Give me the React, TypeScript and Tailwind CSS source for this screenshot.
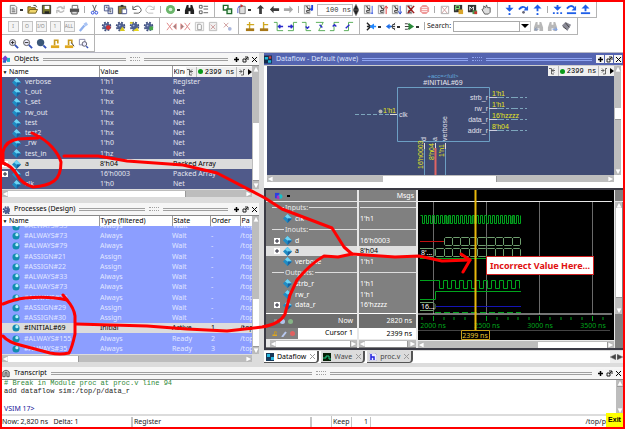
import React from "react";

type Kids = { children?: React.ReactNode };

/* ---------- small drawings ---------- */
const DARK = "#3c3c3c";
const doc = (
  <>
    <path d="M2.500 1.500h5l2 2v7h-7z" fill="#f4f4f4" stroke="#777" />
    <path d="M4 4.500h3M4 6.500h4M4 8.500h4" stroke="#555" />
  </>
);
const gear = (
  <>
    <circle cx="6" cy="6" r="3.600" fill="#4d5f92" />
    <circle cx="6" cy="6" r="4.300" fill="none" stroke="#3d4c7c" strokeWidth="1.800" strokeDasharray="2 1.400" />
    <circle cx="5" cy="5" r="1" fill="#a4b2d8" />
  </>
);
const lens = (
  <>
    <circle cx="5" cy="5" r="3.300" fill="#eef" stroke="#555" />
    <path d="M7.500 7.500L11 11" stroke="#3450b8" strokeWidth="2" />
  </>
);
const lock = (
  <>
    <path d="M5 8V2.500h3.500V6" fill="none" stroke="#c89a20" strokeWidth="1.800" />
    <path d="M1 8h9v3H1z" fill="#e0a820" />
  </>
);
const wave = (d: string, blue: string) => (
  <>
    <path d={d} fill="none" stroke="#4fa84f" />
    <path d={blue} fill="none" stroke="#2c2ccc" strokeWidth="1.500" />
  </>
);
const miniDoc = (mark: React.ReactNode) => (
  <>
    <path d="M1.500 1.500h6v9h-6z" fill="#f0f0f0" stroke="#999" />
    <path d="M3 3h2v2h2v2H4v2h3" fill="none" stroke="#333" />
    {mark}
  </>
);
const binoc = (c: string) => (
  <path d="M3 1h2v3h2V1h2l2 6v4H7V8H5v3H1V7z" fill={c} />
);

const ICONS: Record<string, React.ReactNode> = {
  doc,
  open: (
    <>
      <path d="M1 9.500V3h3l1 1h4v2" fill="#c9a93a" stroke="#6b5a1c" />
      <path d="M1 10l2-4h8.500l-2 4z" fill="#efd56a" stroke="#6b5a1c" />
      <path d="M7 1.500q3-1 3.500 2" fill="none" stroke="#333" />
    </>
  ),
  save: (
    <>
      <path d="M1.500 1.500h9v9h-9z" fill="#77782e" stroke="#333" />
      <path d="M4 2h5v3.500H4z" fill="#fff" />
      <path d="M4 8h5v2.500H4z" fill="#222" />
    </>
  ),
  refresh: <path d="M2 5q4-4 7 0M10 2v3H7M10 7q-4 4-7 0M2 10V7h3" fill="none" stroke="#bbb" strokeWidth="1.500" />,
  print: (
    <>
      <path d="M3.500 5V1.500h6V5" fill="#fff" stroke="#666" />
      <path d="M1 5h10v4H1z" fill="#555" />
      <path d="M3 8h6v3H3z" fill="#ddd" stroke="#555" />
    </>
  ),
  cut: (
    <>
      <path d="M4 1l3 7M8 1L5 8" stroke="#555" />
      <circle cx="4" cy="9.500" r="1.500" fill="none" stroke="#2244dd" />
      <circle cx="8" cy="9.500" r="1.500" fill="none" stroke="#2244dd" />
    </>
  ),
  copy: (
    <>
      <path d="M1.500 1.500h5v6h-5zM5.500 4.500h5v6h-5z" fill="#e8ecff" stroke="#4a5688" />
      <path d="M3 3.500h2M7 6.500h2M7 8.500h2" stroke="#333" />
    </>
  ),
  paste: (
    <>
      <path d="M1.500 2.500h8v8h-8z" fill="#8a8240" stroke="#444" />
      <path d="M4 1h3v2H4z" fill="#333" />
      <path d="M5.500 5.500h5v5h-5z" fill="#fff" stroke="#55609a" />
    </>
  ),
  undo: <path d="M2 2v4h4M2 5q5-5 8-1t-2 6H3" fill="none" stroke="#555" />,
  redo: <path d="M10 2v4H6M10 5Q5 0 2 4t2 6h5" fill="none" stroke="#bbb" />,
  go: (
    <>
      <circle cx="6" cy="6" r="5" fill="#6bb56b" />
      <circle cx="6" cy="6" r="2" fill="#d9f0d9" />
    </>
  ),
  find: binoc("#222"),
  list: <path d="M1.500 1.500h3v3h-3zM1.500 7.500h3v3h-3zM6 2.500h5M6 5.500h5M6 9.500h5" fill="none" stroke="#555" />,
  boxes: (
    <>
      <path d="M1.500 1.500h5v5h-5z" fill="#fff" stroke="#1f6b2c" strokeWidth="1.500" />
      <path d="M5.500 5.500h5v5h-5z" fill="#d7f3d7" stroke="#1f6b2c" strokeWidth="1.500" />
    </>
  ),
  reload: (
    <>
      <path d="M4 2.500h6v8H4z" fill="#ddd" stroke="#777" />
      <path d="M2 10V5q0-3 4-3" fill="none" stroke="#4455cc" />
      <path d="M5 0l3 2-3 2z" fill="#c33" />
    </>
  ),
  up: <path d="M6 1L2 5h2.500v6h3V5H10z" fill={DARK} />,
  left: <path d="M1 6l4-4v2.500h6v3H5V10z" fill={DARK} />,
  right: <path d="M11 6L7 2v2.500H1v3h6V10z" fill="#a8a8a8" />,
  run1: miniDoc(<path d="M10 1v6M8 5l2 2" stroke="#2244dd" strokeWidth="2" />),
  run2: miniDoc(<path d="M10 2v9M8 10h3" stroke="#3355dd" />),
  run3: miniDoc(<path d="M10 3v8M8 5l2-3 2 3" fill="none" stroke="#d33" />),
  run4: miniDoc(<path d="M10 2v9M8 8l2 3 2-3" fill="none" stroke="#2244cc" />),
  brk: miniDoc(<path d="M3 2l7 8M10 2l-7 8" stroke="#a01818" strokeWidth="1.500" />),
  stop: (
    <>
      <path d="M4 1h4l3 3v4l-3 3H4L1 8V4z" fill="#ee9a9a" />
      <path d="M3 4h6M3 6h6M3 8h6" stroke="#fff" />
    </>
  ),
  cross: (
    <>
      <path d="M2.500 2.500h8v8h-8z" fill="none" stroke="#aaa" />
      <path d="M3 3l6 7M9 3l-6 7" stroke="#c99" />
    </>
  ),
  perf: (
    <>
      <path d="M1 1h9v8H1z" fill="#333" />
      <path d="M3 2v5M3 2h4v3H3" fill="none" stroke="#8f8" />
      <path d="M6 6h5v5H6z" fill="#d9a52c" />
    </>
  ),
  mem: (
    <>
      <path d="M1 1h9v8H1z" fill="#333" />
      <path d="M3 7V3l2 2 2-2v4" fill="none" stroke="#fff" />
      <path d="M6 7h5v4H6z" fill="#4a9a4a" />
      <path d="M8 8h3v3H8z" fill="#c33" />
    </>
  ),
  hand: <path d="M4 11L1 6l2-1V2l2 2 1-3 1 3 3 0v5l-2 2z" fill="#ddd" stroke="#555" />,
  stepIn: (
    <>
      <path d="M6 1v5M4 5h4L6 7z" stroke="#1f5fe8" strokeWidth="2" fill="#1f5fe8" />
      <circle cx="6" cy="11" r="1.200" fill="#1f5fe8" />
    </>
  ),
  stepOver: (
    <>
      <path d="M1 6q4-5 8-1" fill="none" stroke="#1f5fe8" strokeWidth="2" />
      <path d="M11 2v5H6z" fill="#1f5fe8" />
      <circle cx="6" cy="9" r="1.500" fill="#667" />
    </>
  ),
  stepOut: (
    <>
      <path d="M6 8V4M4 4l2-2 2 2z" stroke="#1f5fe8" strokeWidth="2" fill="#1f5fe8" />
      <circle cx="6" cy="11" r="1.200" fill="#1f5fe8" />
    </>
  ),
  stepInC: (
    <>
      <path d="M6 1v4M4 4h4L6 6z" stroke="#1f5fe8" strokeWidth="2" fill="#1f5fe8" />
      <path d="M1 10h2M5 10h2M9 10h2" stroke="#1f5fe8" strokeWidth="2" />
    </>
  ),
  stepOverC: (
    <>
      <path d="M1 5q4-5 8-1" fill="none" stroke="#1f5fe8" strokeWidth="2" />
      <path d="M11 2v5H6z" fill="#1f5fe8" />
      <path d="M1 10h10" stroke="#1f5fe8" strokeWidth="2" />
    </>
  ),
  stepOutC: (
    <>
      <path d="M6 8V3M4 4l2-2 2 2z" stroke="#1f5fe8" strokeWidth="2" fill="#1f5fe8" />
      <path d="M1 10h10" stroke="#1f5fe8" strokeWidth="2" />
    </>
  ),
  wand: (
    <>
      <path d="M2 11l5-6" stroke="#8fb0ee" strokeWidth="2.500" />
      <path d="M6 3l3-2 2 3-3 2z" fill="#aac4f4" />
    </>
  ),
  gearRed: (
    <>
      {gear}
      <circle cx="8" cy="7" r="2.500" fill="#d63030" />
    </>
  ),
  gearYel: (
    <>
      {gear}
      <path d="M8 6l3 5H5z" fill="#d8c820" />
    </>
  ),
  gearYel2: (
    <>
      {gear}
      <path d="M9 7l2 4H4z" fill="#e8d820" />
      <path d="M1 1h3v2H1z" fill="#d8c820" />
    </>
  ),
  gearGrn: (
    <>
      {gear}
      <path d="M7 6h4v4H7z" fill="#4aa84a" />
    </>
  ),
  xLeft: <path d="M1 2l6 8M7 2L1 10M11 3L8 6l3 3z" stroke="#dd8080" fill="#888" />,
  xRight: <path d="M5 2l6 8M11 2l-6 8M1 3l3 3-3 3z" stroke="#dd8080" fill="#888" />,
  page: (
    <>
      <path d="M1.500 1.500h9v9h-9z" fill="#f4f4f4" stroke="#c4c4c4" />
      <path d="M4 3.500h3l1 1v5H4z" fill="#fff" stroke="#999" />
    </>
  ),
  pageX: (
    <>
      <path d="M1.500 1.500h8v9h-8z" fill="#f0f0f0" stroke="#bbb" />
      <path d="M3 4l5 5M8 4L3 9" stroke="#cc9999" />
    </>
  ),
  pctX: (
    <>
      <path d="M2 2l5 5M7 2L2 7" stroke="#cc9999" />
      <circle cx="8.500" cy="8.500" r="2" fill="#a9b6dd" />
    </>
  ),
  curAdd: (
    <>
      <path d="M5 1v8M2 4h8" stroke="#d0a820" strokeWidth="1.500" />
      <path d="M1 8h9v3H1z" fill="#a87818" />
    </>
  ),
  curDel: (
    <>
      <path d="M5 1v8M5 4h5" stroke="#d0a820" strokeWidth="1.500" />
      <path d="M1 8h9v3H1z" fill="#a87818" />
    </>
  ),
  wA: wave("M1 1.500h3.500v9h6.500", "M5 6h6M8 4L6 6l2 2"),
  wB: wave("M1 10.500h6v-9h4", "M1 6h6M4 4l2 2-2 2"),
  wC: wave("M1 1.500h4.500v9h5.500", "M5 6l2 2 2-2"),
  wD: wave("M1 1.500h8L4 10.500h7", "M5 4l3 3"),
  wE: wave("M1 10.500h4.500v-9h5.500", "M4 6l2-2 2 2"),
  wF: wave("M1 10.500h5v-9h5", "M3 8l4-4"),
  inj1: (
    <>
      <path d="M1 2l4 4-4 4M1 6h5" fill="none" stroke="#222" strokeWidth="1.500" />
      <path d="M5 6l3-2v4zM8 6h3" fill="#28f" stroke="#28f" strokeWidth="1.500" />
    </>
  ),
  inj2: (
    <>
      <path d="M11 2L7 6l4 4M7 6h4M8 4h3M8 8h3" fill="none" stroke="#333" />
      <path d="M1 6l4-3v6zM4 5h3v2H4z" fill="#1f6fe8" />
    </>
  ),
  inj3: (
    <>
      <path d="M1 3h3l3 3-3 3H1M1 6h5" fill="none" stroke="#333" />
      <path d="M5 2l6 4-6 4z" fill="#2a8a3a" />
    </>
  ),
  findB: (
    <>
      {binoc("#b8b8b8")}
      <path d="M2 9h4M2 9l2-2M2 9l2 2" stroke="#89b" />
    </>
  ),
  findF: (
    <>
      {binoc("#b8b8b8")}
      <path d="M6 9h5M11 9L9 7M11 9l-2 2" stroke="#77a0ee" />
    </>
  ),
  knot: (
    <>
      <path d="M1 5l4-4 6 3-4 7z" fill="#8a8a96" />
      <path d="M2 6l4 3M5 2l4 5" stroke="#444" />
    </>
  ),
  zoomIn: (
    <>
      {lens}
      <path d="M3 5h4M5 3v4" stroke="#222" />
    </>
  ),
  zoomOut: (
    <>
      {lens}
      <path d="M3 5h4" stroke="#222" />
    </>
  ),
  zoomFull: (
    <>
      <circle cx="5" cy="5" r="4" fill="#3c5878" />
      <path d="M8 8l3 3" stroke="#3450b8" strokeWidth="2" />
    </>
  ),
  lock,
  lock2: (
    <>
      {lock}
      <path d="M8 5l3 4" stroke="#333" />
    </>
  ),
  zoomBox: (
    <>
      <path d="M1.500 1.500h6v6h-6z" fill="none" stroke="#88a" />
      <circle cx="7" cy="6.500" r="2.500" fill="#eef" stroke="#556" />
      <path d="M9 9l2 2" stroke="#3450b8" strokeWidth="1.500" />
    </>
  ),
};

function Tool({ name }: { name: string }) {
  return (
    <button type="button" aria-label={name} className="flex w-[14px] shrink-0 items-center justify-center">
      <svg viewBox="0 0 12 12" className="h-[11px] w-[11px]">{ICONS[name]}</svg>
    </button>
  );
}

function Letter({ text }: { text: string }) {
  return (
    <button type="button" className="flex w-[14px] shrink-0 items-center justify-center">
      <span className="flex h-[11px] w-[11px] items-center justify-center border border-[#c4c4c4] bg-[#f4f4f4] text-[5px] leading-none text-[#888]">{text}</span>
    </button>
  );
}

/* a dash is a separator, a dot is the arrow of a drop-down */
function Tools({ names }: { names: string }) {
  return (
    <>
      {names.split(" ").map((n, i) =>
        n === "-" ? (
          <span key={i} className="flex w-[6px] shrink-0 justify-center py-1"><span className="w-px bg-[#aaa]" /></span>
        ) : n === "." ? (
          <span key={i} className="flex w-[5px] shrink-0 items-center pt-px"><span className="h-[2px] w-[3px] bg-[#333]" /></span>
        ) : (
          <Tool key={i} name={n} />
        )
      )}
    </>
  );
}

const Group = ({ children }: Kids) => (
  <div className="flex shrink-0 items-stretch border-b border-r border-[#b4b4b4] bg-white px-1">{children}</div>
);

function Tri({ dir, color = "#fff" }: { dir: "up" | "down" | "left" | "right"; color?: string }) {
  const d = { up: "M3 0l3 6H0z", down: "M3 6l3-6H0z", left: "M0 3l6-3v6z", right: "M6 3L0 0v6z" }[dir];
  return (
    <svg viewBox="0 0 6 6" className="h-[6px] w-[6px] shrink-0"><path d={d} fill={color} stroke="#999" strokeWidth="0.500" /></svg>
  );
}

function VScroll({ before, thumb, after }: { before: number; thumb: number; after: number }) {
  return (
    <div className="flex w-[7px] shrink-0 flex-col items-center bg-[#bdbdbd]">
      <Tri dir="up" />
      <div style={{ flexGrow: before }} />
      <div className="w-[6px] border-b border-[#999] bg-white" style={{ flexGrow: thumb }} />
      <div style={{ flexGrow: after }} />
      <Tri dir="down" />
    </div>
  );
}

function HScroll({ before, thumb, after }: { before: number; thumb: number; after: number }) {
  return (
    <div className="flex h-[7px] shrink-0 items-center bg-[#bdbdbd]">
      <Tri dir="left" />
      <div style={{ flexGrow: before }} />
      <div className="h-[6px] border-r border-[#999] bg-white" style={{ flexGrow: thumb }} />
      <div style={{ flexGrow: after }} />
      <Tri dir="right" />
    </div>
  );
}

function TitleBar({ title, icon, blue }: { title: string; icon: React.ReactNode; blue?: boolean }) {
  const line = blue ? "border-[#8fa4f0]" : "border-[#a0a0a0]";
  const btn = "flex h-[8px] w-[8px] items-center justify-center bg-[#f4f4f4]";
  return (
    <div className={"flex h-[12px] shrink-0 items-center gap-1 pr-px " + (blue ? "bg-[#5464b0] text-[#dfe4ff]" : "bg-[#f6f6f6] text-black")}>
      <svg viewBox="0 0 10 10" className="h-[9px] w-[8px] shrink-0">{icon}</svg>
      <h2 className="whitespace-nowrap">{title}</h2>
      <div className={"h-[3px] flex-1 border-y " + line} />
      <div className={"h-[4px] w-[10px] border-y border-dotted " + line} />
      <div className={"h-[3px] flex-1 border-y " + line} />
      <div className="flex gap-px">
        <button type="button" aria-label="Zoom" className={btn}><svg viewBox="0 0 7 7" className="h-[7px] w-[7px]"><path d="M3.500 1v5M1 3.500h5" stroke="#000" strokeWidth="1.500" /></svg></button>
        <button type="button" aria-label="Undock" className={btn}><svg viewBox="0 0 7 7" className="h-[7px] w-[7px]"><path d="M1 3h3v3H1zM3 1h3v3M6 1L3 4" fill="none" stroke="#222" /></svg></button>
        <button type="button" aria-label="Close" className={btn}><svg viewBox="0 0 7 7" className="h-[7px] w-[7px]"><path d="M1 1l5 5M6 1L1 6" stroke="#000" /></svg></button>
      </div>
    </div>
  );
}

function TimeBox() {
  return (
    <div className="flex h-[10px] w-[66px] shrink-0 items-center justify-between bg-[#f0f0f0] text-black">
      <svg viewBox="0 0 8 8" className="h-[8px] w-[8px]"><path d="M1 1.500h2.500V7H6M7 3.500H4l2-2M4 3.500l2 2" fill="none" stroke="#444" strokeWidth="0.800" /></svg>
      <span className="h-[10px] w-px bg-[#bbb]" />
      <span className="h-[5px] w-[5px] rounded-full bg-[#0a9a1a]" />
      <span className="whitespace-nowrap font-['Liberation_Mono','DejaVu_Sans_Mono',monospace] text-[7px]">2399 ns</span>
      <span className="h-[10px] w-px bg-[#bbb]" />
      <svg viewBox="0 0 8 8" className="h-[8px] w-[8px]"><path d="M7 1.500H5.500V7H3M1 3.500h3l-2-2M4 3.500l-2 2" fill="none" stroke="#444" strokeWidth="0.800" /></svg>
      <svg viewBox="0 0 4 6" className="h-[6px] w-[4px]"><path d="M0 0l4 3-4 3z" fill="#000" /></svg>
    </div>
  );
}

const Diamond = () => (
  <svg viewBox="0 0 9 9" className="h-[9px] w-[9px] shrink-0">
    <path d="M4.500 0L9 4.500 4.500 9 0 4.500z" fill="#1f8cc4" />
    <path d="M4.500 0L9 4.500H4.500L2 2.500z" fill="#6fd4f4" />
    <path d="M4.500 9L9 4.500H5z" fill="#1560a0" />
  </svg>
);
const Ball = () => (
  <svg viewBox="0 0 9 9" className="h-[8px] w-[8px] shrink-0">
    <circle cx="4.500" cy="4.500" r="4" fill="#128cae" />
    <circle cx="5.500" cy="3" r="1.800" fill="#b8f2fa" />
  </svg>
);
const Plus = () => (
  <svg viewBox="0 0 6 6" className="h-[6px] w-[6px] shrink-0"><path d="M0 0h6v6H0z" fill="#fff" /><path d="M1 3h4M3 1v4" stroke="#223" /></svg>
);

const OBJECTS: [string, string, string][] = [
  ["verbose", "1'h1", "Register"], ["t_out", "1'hx", "Net"], ["t_set", "1'hx", "Net"], ["rw_out", "1'hx", "Net"],
  ["test", "1'hx", "Net"], ["test2", "1'hx", "Net"], ["_rw", "1'h0", "Net"], ["test_in", "1'hz", "Net"],
  ["a", "8'h04", "Packed Array"], ["d", "16'h0003", "Packed Array"], ["clk", "1'h0", "Net"],
];
const PROCS: [string, string, string, string][] = [
  ["#ALWAYS#73", "Always", "Wait", "-"], ["#ALWAYS#79", "Always", "Wait", "-"], ["#ASSIGN#21", "Assign", "Wait", "-"],
  ["#ASSIGN#22", "Assign", "Wait", "-"], ["#ALWAYS#33", "Always", "Wait", "-"], ["#ALWAYS#73", "Always", "Wait", "-"],
  ["#ALWAYS#79", "Always", "Wait", "-"], ["#ASSIGN#29", "Assign", "Wait", "-"], ["#ASSIGN#30", "Assign", "Wait", "-"],
  ["#INITIAL#69", "Initial", "Active", "1"], ["#ALWAYS#155", "Always", "Ready", "2"], ["#ALWAYS#35", "Always", "Ready", "3"],
];

const TH = "border-r border-[#999] bg-white p-0 pl-px text-left font-normal";

function ObjectsPanel() {
  return (
    <section>
      <TitleBar title="Objects" icon={<><path d="M4 0l4 4-4 4-4-4z" fill="#7a3fd0" /><path d="M6 3h4v5H6z" fill="#20b0c8" /><path d="M1 6h4v3H1z" fill="#2a60c8" /></>} />
      <div className="flex border-t border-[#888]">
        <table className="w-full flex-1 table-fixed border-collapse leading-[10px]">
          <colgroup><col className="w-[6px]" /><col className="w-[91px]" /><col className="w-[73px]" /><col /></colgroup>
          <thead>
            <tr className="h-[11px] text-black">
              <th className="bg-white p-0 text-[5px]">▼</th>
              <th className={TH}>Name</th>
              <th className={TH}>Value</th>
              <th className="bg-white p-0 pl-px font-normal"><div className="flex justify-between"><span className="w-[11px] overflow-hidden text-left">Kind</span><TimeBox /></div></th>
            </tr>
          </thead>
          <tbody>
            {OBJECTS.map(([n, v, k]) => (
              <tr key={n} className={"h-[10px] nth-[4n]:h-[11px] " + (n === "a" ? "bg-[#dcdcdc] text-black" : "bg-[#505a8a] text-[#e4e6f0]")}>
                <td className="p-0">{(n === "a" || n === "d") && <Plus />}</td>
                <td className="p-0 pl-1"><div className="flex h-[10px] items-center gap-1"><Diamond />{n}</div></td>
                <td className="p-0 pl-px">{v}</td>
                <td className="p-0 pl-px">{k}</td>
              </tr>
            ))}
          </tbody>
        </table>
        <VScroll before={51} thumb={58} after={2} />
      </div>
      <div className="mt-px pr-[7px]"><HScroll before={0} thumb={176} after={60} /></div>
    </section>
  );
}

function ProcessesPanel() {
  return (
    <section>
      <TitleBar title="Processes (Design)" icon={gear} />
      <div className="flex border-t border-[#888]">
        <table className="w-full flex-1 table-fixed border-collapse leading-[10px]">
          <colgroup><col className="w-[6px]" /><col className="w-[91px]" /><col className="w-[73px]" /><col className="w-[38px]" /><col className="w-[30px]" /><col /></colgroup>
          <thead>
            <tr className="h-[10px] text-black">
              <th className="bg-white p-0 text-[5px]">▼</th>
              <th className={TH}>Name</th>
              <th className={TH}>Type (filtered)</th>
              <th className={TH}>State</th>
              <th className={TH}>Order</th>
              <th className="bg-white p-0 pl-px text-left font-normal">Pa</th>
            </tr>
          </thead>
          <tbody>
            <tr className="h-[5px] bg-[#8c9eff] text-[#dfe5ff]">
              <td className="p-0" />
              {["#ALWAYS#33", "Always", "Wait", "-", "/top"].map((t, i) => (
                <td key={t} className={i ? "p-0 pl-px" : "p-0 pl-1"}><div className="flex h-[5px] items-end gap-1 overflow-hidden">{i === 0 && <Ball />}{t}</div></td>
              ))}
            </tr>
            {PROCS.map(([n, t, s, o], i) => (
              <tr key={i} className={"h-[10px] nth-[4n]:h-[11px] " + (i === 9 ? "bg-[#dcdcdc] text-black" : "bg-[#8c9eff] text-[#e2e8ff]")}>
                <td className="p-0" />
                <td className="p-0 pl-1"><div className="flex h-[10px] items-center gap-1"><Ball />{n}</div></td>
                <td className="p-0 pl-px">{t}</td>
                <td className="p-0">{s}</td>
                <td className="p-0 pl-px">{o}</td>
                <td className="p-0"><div className="overflow-hidden">/top</div></td>
              </tr>
            ))}
          </tbody>
        </table>
        <VScroll before={73} thumb={44} after={1} />
      </div>
      <div className="mt-px pr-[7px]"><HScroll before={0} thumb={69} after={166} /></div>
    </section>
  );
}

/* ---------- dataflow schematic ---------- */
const PORTS: [string, string, number][] = [["strb_r", "1'h1", 32], ["rw_r", "1'h1", 43], ["data_r", "16'hzzzz", 54], ["addr_r", "8'h04", 65]];

function Dataflow() {
  return (
    <section className="flex flex-col">
      <TitleBar blue title="Dataflow - Default (wave)" icon={<><path d="M0 0h10v10H0z" fill="#142a4a" /><path d="M1 2h4v3H1zM5 6h4v3H5z" fill="#20b8d8" /><path d="M6 1h3v3H6z" fill="#d04040" /></>} />
      <div className="flex border-t border-[#ccc] bg-white pl-[3px] pr-[2px]">
        <div className="relative h-[109px] flex-1 overflow-hidden bg-[#3f4a72]">
          <svg className="h-[109px] w-[347px] font-['Liberation_Sans',Arial,sans-serif] text-[7px]" viewBox="0 0 347 109">
            <path d="M130.500 21.500h92v54h-92z" fill="none" stroke="#6c9fc4" />
            <text x="176" y="12" textAnchor="middle" fill="#62a8dc" className="text-[6px]">+acc=&lt;full&gt;</text>
            <text x="176" y="19" textAnchor="middle" fill="#e8e8f0">#INITIAL#69</text>
            <path d="M88 48.500h35" stroke="#7da6bc" strokeDasharray="4 2" />
            <path d="M123 48.500h7" stroke="#ddd" />
            <circle cx="113.500" cy="45.500" r="2" fill="#b4b4b4" />
            <text x="116" y="47" fill="#e6e620">1'h1</text>
            <text x="132" y="51" fill="#e0e0ec">clk</text>
            {PORTS.map(([n, v, y]) => (
              <g key={n}>
                <text x="221" y={y + 2} textAnchor="end" fill="#e0e0ec">{n}</text>
                <path d={`M222 ${y - 0.5}h8`} stroke="#ccd" />
                <path d={`M230 ${y - 0.5}h30`} stroke="#7da6bc" strokeDasharray="7 2 3 2" />
                <text x="225" y={y - 2} fill="#e6e620">{v}</text>
              </g>
            ))}
            <path d="M157.500 77v32M178.500 77v32" stroke="#6c9fc4" />
            <path d="M157.500 77v6M168.500 77v6M178.500 77v6" stroke="#ddd" />
            <path d="M168.500 82v27" stroke="#e06464" strokeWidth="2" />
            <g fill="#e0e0ec">
              <text transform="translate(159 75) rotate(-90)">d</text>
              <text transform="translate(170 75) rotate(-90)">a</text>
              <text transform="translate(180 75) rotate(-90)">verbose</text>
            </g>
            <g fill="#e6e620">
              <text transform="translate(156 103) rotate(-90)">16'h0003</text>
              <text transform="translate(167 94) rotate(-90)">8'h04</text>
              <text transform="translate(177 91) rotate(-90)">1'h1</text>
            </g>
          </svg>
          <div className="absolute right-0 top-0"><TimeBox /></div>
        </div>
        <VScroll before={38} thumb={11} after={51} />
      </div>
      <div className="bg-white pb-[6px] pl-[3px] pr-[9px]"><HScroll before={118} thumb={122} after={119} /></div>
    </section>
  );
}

/* ---------- wave window ---------- */
type Sig = { name: string; value?: string; kind: "group" | "sig"; plus?: boolean; sel?: boolean };
const SIGNALS: Sig[] = [
  { name: "Inputs:", kind: "group" },
  { name: "clk", value: "1'h1", kind: "sig" },
  { name: "Inouts:", kind: "group" },
  { name: "d", value: "16'h0003", kind: "sig", plus: true },
  { name: "a", value: "8'h04", kind: "sig", plus: true, sel: true },
  { name: "verbose", value: "1'h1", kind: "sig" },
  { name: "Outputs:", kind: "group" },
  { name: "strb_r", value: "1'h1", kind: "sig" },
  { name: "rw_r", value: "1'h1", kind: "sig" },
  { name: "data_r", value: "16'hzzzz", kind: "sig", plus: true },
];
const ROW = "flex h-[11px] items-center nth-[5n]:h-[10px] ";

const square = (from: number, to: number, half: number, hi: number, lo: number) => {
  let d = `M${from} ${hi}`;
  let up = true;
  for (let x = from + half; x <= to; x += half) {
    up = !up;
    d += `H${x}V${up ? hi : lo}`;
  }
  return d;
};
const EDGES = [26.5, 34.5, 42.5, 51.5, 59.5, 68.5, 77.5, 85.5, 94.5, 102.5];
const bus = (edges: number[], top: number) =>
  edges.slice(1).map((b, i) => {
    const a = edges[i];
    return `M${a + 1} ${top}H${b - 1}L${b} ${top + 1}V${top + 7}L${b - 1} ${top + 8}H${a + 1}L${a} ${top + 7}V${top + 1}Z`;
  }).join("");

function Waves() {
  return (
    <svg className="h-[150px] w-[194px] text-[7px]" viewBox="0 0 194 150">
      <path d="M15.500 12v112M68.500 12v112M121.500 12v112M174.500 12v112" stroke="#6a6a6a" />
      <g fill="none" stroke="#00a41c">
        <path d="M26 26h7v8h-7zM52 26h6v8h-6zM92 26h5v8h-5z" fill="#064a10" stroke="none" />
        <path d={square(2.5, 103, 2, 25.5, 33.5)} />
        <path d="M2 68.500H103" />
        <path d={square(17.5, 103, 4, 90.5, 98.5)} />
        <path d="M2 90.500h15.500" />
        <path d="M2 109.500h15.500v-8H103" />
        <path d="M17 122.500H103" strokeDasharray="6 3" />
        <path d="M4 127v3M26 127v3M36 127v3M47 127v3M79 127v3M90 127v3M100 127v3M111 127v3M132 127v3M143 127v3M153 127v3M164 127v3M185 127v3M15.500 126v5M68.500 126v5M121.500 126v5M174.500 126v5" />
      </g>
      <g fill="none" stroke="#6f9f6f">
        <path d={bus(EDGES, 47.5)} />
        <path d={bus([17.5, ...EDGES], 58.5)} />
        <path d="M2 58.500h13l2 2v4l-2 2H2M2 112.500h13l2 2v4l-2 2H2" />
      </g>
      <path d="M2 51.500h24" stroke="#c01010" />
      <path d="M18 116.500h85" stroke="#1414b4" />
      <text x="3" y="65" fill="#fff">8'...</text>
      <text x="3" y="119" fill="#fff">16...</text>
      <path d="M0 11.500h195M0 124h195" stroke="#e8e8e8" />
      <g fill="#00a41c" textAnchor="middle">
        <text x="15" y="138">2000 ns</text>
        <text x="69" y="138">2500 ns</text>
        <text x="122" y="138">3000 ns</text>
        <text x="175" y="138">3500 ns</text>
      </g>
      <path d="M0 140.500h192" stroke="#444" />
      <path d="M57.500 0v140" stroke="#e8b80c" strokeWidth="2" />
      <path d="M43.500 140.500h28v9h-28z" fill="#000" stroke="#c8a01c" />
      <text x="57" y="148" textAnchor="middle" fill="#e8c830">2399 ns</text>
    </svg>
  );
}

function WavePanel() {
  return (
    <section className="flex border-2 border-r-0 border-[#3a3a44] bg-[#e8e8e8] text-white">
      <div className="flex w-[93px] shrink-0 flex-col border-r-2 border-[#e8e8e8] bg-[#808080]">
        <div className="flex h-[12px] items-center gap-1 border-b border-[#e8e8e8] pl-2">
          <svg viewBox="0 0 10 9" className="h-[8px] w-[9px]"><path d="M1 1h5v6H1z" fill="#2a3fe0" /><circle cx="7" cy="5" r="2.500" fill="#18c0c8" /><path d="M3 4h3v4H3z" fill="#b030c0" /></svg>
          <span className="h-[2px] w-[3px] bg-black" />
        </div>
        <div className="pb-[3px]">
          {SIGNALS.map((s) =>
            s.kind === "group" ? (
              <div key={s.name} className={ROW + "gap-px pl-[6px] text-[#e8e8e8]"}>
                <span className="h-px w-[12px] bg-[#ddd]" />{s.name}<span className="h-px flex-1 bg-[#ddd]" />
              </div>
            ) : (
              <div key={s.name} className={ROW + "gap-[3px] pl-[8px] " + (s.sel ? "bg-[#e0e0e0] text-black" : "")}>
                <span className="w-[6px]">{s.plus && <Plus />}</span><Diamond />{s.name}
              </div>
            )
          )}
        </div>
        <div className="flex h-[15px] items-center gap-[3px] border-t border-white bg-[#6e6e6e] pl-2 pr-1">
          <span className="h-[5px] w-[3px] bg-[#8a8a8a]" /><span className="h-[5px] w-[5px] rounded-full bg-[#b0c4ec]" /><span className="h-[5px] w-[5px] rounded-full bg-[#86b486]" />
          <span className="ml-auto">Now</span>
        </div>
        <div className="flex h-[11px] items-center gap-[3px] pl-[6px]">
          <svg viewBox="0 0 12 12" className="h-[7px] w-[6px]">{lock}</svg>
          <svg viewBox="0 0 6 6" className="h-[6px] w-[6px]"><path d="M1 6l4-5" stroke="#b8c8f0" strokeWidth="2" /></svg>
          <span className="h-[5px] w-[5px] rounded-full bg-[#e06060]" />
          <span className="flex-1 self-stretch bg-white pr-1 text-right text-black">Cursor 1</span>
        </div>
        <div className="bg-[#e8e8e8] pl-1 pt-px"><HScroll before={0} thumb={70} after={0} /></div>
      </div>
      <div className="flex w-[59px] shrink-0 flex-col border-r-2 border-[#e8e8e8] bg-[#808080]">
        <div className="flex h-[12px] items-center justify-end border-b border-[#e8e8e8] pr-[2px]">Msgs</div>
        <div className="pb-[3px]">
          {SIGNALS.map((s) => (
            <div key={s.name} className={ROW + "pl-px " + (s.sel ? "bg-[#e0e0e0] text-black" : "")}>
              {s.value ?? <span className="h-px flex-1 bg-[#ddd]" />}
            </div>
          ))}
        </div>
        <div className="flex h-[15px] items-center justify-end border-t border-white bg-[#6e6e6e] pr-1">2820 ns</div>
        <div className="flex h-[11px] items-center justify-end bg-white pr-1 text-black">2399 ns</div>
        <div className="bg-[#e8e8e8] pt-px"><HScroll before={0} thumb={40} after={2} /></div>
      </div>
      <div className="relative flex min-w-0 flex-1 flex-col bg-black">
        <Waves />
        <div className="bg-[#e8e8e8] pt-px"><HScroll before={110} thumb={66} after={0} /></div>
        <div className="absolute left-[68px] top-[66px] whitespace-nowrap border border-[#d02020] bg-white px-[3px] py-px text-[9px] font-bold leading-[15px] text-[#e01010]">Incorrect Value Here...</div>
      </div>
      <div className="flex w-[9px] shrink-0 flex-col border-l border-[#e8e8e8] bg-[#808080]">
        <div className="h-[12px] border-b border-[#e8e8e8]" />
        <div className="flex h-[112px]"><VScroll before={0} thumb={84} after={9} /></div>
      </div>
    </section>
  );
}

function Tab({ label, icon, active }: { label: string; icon: React.ReactNode; active?: boolean }) {
  return (
    <button type="button" role="tab" aria-selected={!!active} className={"flex h-[12px] items-center gap-[3px] rounded-br-sm border-b border-r-2 border-[#555] px-[2px] " + (active ? "bg-white text-black" : "bg-[#dcdcdc] text-[#444]")}>
      <svg viewBox="0 0 8 8" className="h-[8px] w-[8px]">{icon}</svg>
      {label}
      <svg viewBox="0 0 5 5" className="ml-px h-[5px] w-[5px]"><path d="M0 0l5 5M5 0L0 5" stroke="#999" /></svg>
    </button>
  );
}

export default function App() {
  return (
    <div className="relative flex min-h-screen w-full flex-col overflow-hidden border-2 border-[#ff0000] bg-[#dcdcdc] font-['Noto_Sans','Open_Sans',sans-serif] text-[7px] leading-[10px] text-[#222]">
      <header className="flex flex-col bg-white">
        <div className="flex h-[16px]">
          <Group><Tools names="doc . open save refresh print - cut copy paste undo redo - go . find list" /></Group>
          <Group>
            <span className="w-px" />
            <Tools names="boxes reload . up left right - run1" />
            <div className="mx-[2px] flex items-center">
              <input aria-label="Run length" defaultValue="100 ns" className="h-[12px] w-[36px] border border-[#bbb] bg-white px-px text-right font-['Liberation_Mono','DejaVu_Sans_Mono',monospace] text-[7px] text-[#333]" />
              <div className="flex flex-col"><Tri dir="up" color="#222" /><Tri dir="down" color="#222" /></div>
            </div>
            <Tools names="run2 run3 run4 brk stop - cross perf mem hand" />
          </Group>
          <Group><Tools names="stepIn stepOver stepOut - stepInC stepOverC stepOutC" /></Group>
        </div>
        <div className="flex h-[17px]">
          <Group><Letter text="I" /><Letter text="O" /><Letter text="I/O" /><Letter text="1" /><Letter text="ALL" /><Tool name="wand" /></Group>
          <Group><Tools names="gearRed gearYel gearYel2 gearGrn" /></Group>
          <Group><Tools names="xLeft xRight page pageX pctX" /></Group>
          <Group><Tools names="curAdd curDel wA wB wC wD wE wF" /></Group>
          <Group>
            <Tools names="inj1 . inj2 . inj3 . -" />
            <label htmlFor="search" className="mr-[2px] self-center">Search:</label>
            <input id="search" className="h-[11px] w-[67px] self-center border border-[#aaa] bg-white px-px text-[7px]" />
            <button type="button" aria-label="Search history" className="flex h-[11px] w-[11px] items-center justify-center self-center border border-l-0 border-[#ccc]">
              <svg viewBox="0 0 8 4" className="h-[4px] w-[8px]"><path d="M0 0h8L4 4z" fill="#000" /></svg>
            </button>
            <Tools names="findB findF knot" />
          </Group>
        </div>
        <div className="flex h-[17px]">
          <Group><Tools names="zoomIn zoomOut zoomFull lock lock2 zoomBox" /></Group>
        </div>
      </header>

      <main className="flex border-t border-[#b8b8c4]">
        <div className="flex w-[257px] shrink-0 flex-col gap-[6px]">
          <ObjectsPanel />
          <ProcessesPanel />
        </div>
        <div className="ml-[5px] flex min-w-0 flex-1 flex-col">
          <Dataflow />
          <WavePanel />
          <div role="tablist" className="mt-px flex gap-[2px] bg-white">
            <Tab active label="Dataflow" icon={<><path d="M0 0h8v8H0z" fill="#183858" /><path d="M1 1h3v3H1zM5 4h3v3H5z" fill="#28b8e0" /></>} />
            <Tab label="Wave" icon={<><path d="M0 0h8v8H0z" fill="#062006" /><path d="M0 5h3V3h3v3h2" fill="none" stroke="#2c8" /></>} />
            <Tab label="proc.v" icon={<><path d="M0 0h6l2 2v6H0z" fill="#eef" stroke="#88a" strokeWidth="0.500" /><path d="M2 1v6M2 4h3v3" fill="none" stroke="#2222dd" strokeWidth="1.500" /></>} />
            <div className="ml-auto flex items-center gap-px bg-[#eee]"><Tri dir="left" color="#444" /><Tri dir="right" color="#444" /></div>
          </div>
        </div>
      </main>

      <section className="mt-[4px] flex flex-1 flex-col">
        <TitleBar title="Transcript" icon={<path d="M1 9V3q4-4 8 0v6H6V4H4v5z" fill="#bbb" stroke="#444" />} />
        <div className="flex min-h-[35px] flex-1 border-t border-[#888] bg-white">
          <div className="flex flex-1 flex-col justify-between pl-[2px] font-['Liberation_Mono','DejaVu_Sans_Mono',monospace] leading-[8px]">
            <div>
              <p className="-mt-px text-[#2f8a3a]"># Break in Module proc at proc.v line 94</p>
              <p>add dataflow sim:/top/p/data_r</p>
            </div>
            <p className="pb-px font-['Noto_Sans',sans-serif] text-[#20209a]">VSIM 17&gt;</p>
          </div>
          <VScroll before={0} thumb={0} after={20} />
        </div>
      </section>

      <footer className="flex h-[13px] shrink-0 items-center border-t-2 border-[#dcdcdc] bg-white">
        <div className="w-[131px] whitespace-pre border-r-2 border-[#c4c4c4]">Now: 2,820 ns   Delta: 1</div>
        <div className="w-[179px] border-r-2 border-[#c4c4c4] pl-px">Register</div>
        <div className="h-full w-[20px] border-r border-[#c4c4c4]" />
        <div className="w-[20px] border-r border-[#c4c4c4] pl-px">Keep</div>
        <div className="w-[19px] border-r border-[#c4c4c4] pr-[2px] text-right">1</div>
        <div className="ml-auto pr-[17px]">/top/p</div>
      </footer>
      <button type="button" className="absolute bottom-0 right-0 h-[14px] w-[17px] bg-[#ffff00] font-['Liberation_Sans',Arial,sans-serif] font-bold text-black">Exit</button>

      <svg className="pointer-events-none absolute left-0 top-0 h-[425px] w-[621px]" viewBox="2 2 621 425" fill="none" stroke="#ff0000" strokeWidth="3" strokeLinecap="round" strokeLinejoin="round">
        <path d="M32 133Q45 139 52 147T61 162Q61 176 54 181T33 187Q22 184 17 175T3 163" />
        <path d="M38 138L18 139Q5 141 3 152V163" />
        <path d="M64 156H98L127 161L183 165L217 173L265 198L282 209L332 228L344 247L352 254" />
        <path d="M63 295L67 300Q74 308 75 316V334Q72 348 69 353Q60 355 50 353L20 345Q8 342 3 336" />
        <path d="M3 304Q15 299 25 298Q50 296 67 300" />
        <path d="M76 324L147 326L187 329L227 331L262 327Q280 324 285 314L290 295L297 280Q310 264 324 256L338 257L352 254L395 257L419 256L442 261L470 260" />
        <path d="M461 254L470 260L463 272" />
      </svg>
    </div>
  );
}
